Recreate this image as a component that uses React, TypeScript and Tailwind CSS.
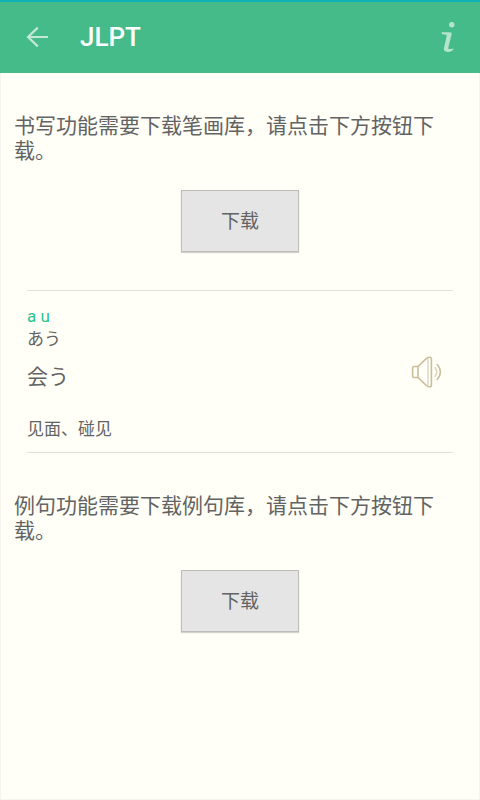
import React from "react";

const ArrowIcon: React.FC = () => (
  <svg width="24" height="24" viewBox="0 0 24 24" fill="none" stroke="#c2e9d5" strokeWidth="2.2">
    <path d="M23 11H3M12.8 1.6L3 11L12.8 20.4" />
  </svg>
);

const InfoIcon: React.FC = () => (
  <svg width="16" height="32" viewBox="0 0 16 32" fill="#b5e4cd">
    <circle cx="11.8" cy="2.8" r="2.7" />
    <path d="M1.6 10.2H9.6C11.2 10.2 12 11 11.6 12.6L8.4 25.2C8 26.8 8.6 27.2 10 27.1L13.8 26.7C13 28.6 11 29.9 8 29.9C4.6 29.9 3.4 28.4 4.1 25.6L6.6 14.6C6.9 13 6.5 12.6 5.2 12.5L3.4 12.4C2 12.2 1.3 11.4 1.6 10.2Z" />
  </svg>
);

const SpeakerIcon: React.FC = () => (
  <svg width="32" height="32" viewBox="0 0 32 32" fill="none" stroke="#c9bf9c" strokeWidth="1.6" strokeLinejoin="round" strokeLinecap="round">
    <path d="M3 10.5H7V21.5H3Q1.6 21.5 1.6 19.5V12.5Q1.6 10.5 3 10.5Z" />
    <path d="M7 10.5L15.5 2.4Q17 1.2 18.4 1.2Q20.4 1.2 20.4 3V29Q20.4 30.8 18.4 30.8Q17 30.8 15.5 29.6L7 21.5" />
    <path d="M17 3V29" stroke="#ddd6bd" strokeWidth="1.4" />
    <path d="M24 11.5Q27.6 16 24 20.5" stroke="#ddd6bd" />
    <path d="M26.3 8.5Q32.6 16 26.3 23.5" />
  </svg>
);

const DownloadSection: React.FC<{ text: string }> = ({ text }) => (
  <section className="flex flex-col items-center">
    <p className="w-full pl-[13px] pr-8 text-[21px] leading-[25px]">{text}</p>
    <button
      type="button"
      className="mt-[26px] flex h-[62px] w-[118px] items-center justify-center border border-[#bcbcb9] bg-[#e5e5e5] pt-[2px] text-[19px] shadow-[0_1px_1px_#d4d4ce]"
    >
      下载
    </button>
  </section>
);

const App: React.FC = () => {
  return (
    <div className="flex min-h-screen flex-col border border-t-0 border-[#f5f5ee] bg-[#fffff8] font-['Roboto','Noto_Sans_CJK_SC',sans-serif] text-[#636363]">
      <header className="-mx-px flex h-[73px] items-center border-t-2 border-[#10b0b8] bg-[#46bb8a] pr-6 pl-[25px]">
        <button type="button" aria-label="返回">
          <ArrowIcon />
        </button>
        <h1 className="ml-[31px] flex-1 text-[26px] font-medium text-white">JLPT</h1>
        <button type="button" aria-label="信息">
          <InfoIcon />
        </button>
      </header>

      <main className="pt-[41px]">
        <DownloadSection text="书写功能需要下载笔画库，请点击下方按钮下载。" />

        <article className="mx-[26px] mt-[38px] mb-[41px] border-y border-[#e0e0dc] pt-[14px] pb-3">
          <div className="text-[17px] leading-[22px]">
            <p className="text-[#2cc48d]">a u</p>
            <p lang="ja" className="font-['Noto_Sans_CJK_JP',sans-serif]">あう</p>
          </div>
          <div className="mt-[6px] flex items-center justify-between pr-[10px]">
            <p lang="ja" className="pt-2 font-['Noto_Sans_CJK_JP',sans-serif] text-[21px] leading-[25px]">会う</p>
            <button type="button" aria-label="发音">
              <SpeakerIcon />
            </button>
          </div>
          <p className="mt-[30px] text-[17px] leading-[22px]">见面、碰见</p>
        </article>

        <DownloadSection text="例句功能需要下载例句库，请点击下方按钮下载。" />
      </main>
    </div>
  );
};

export default App;
